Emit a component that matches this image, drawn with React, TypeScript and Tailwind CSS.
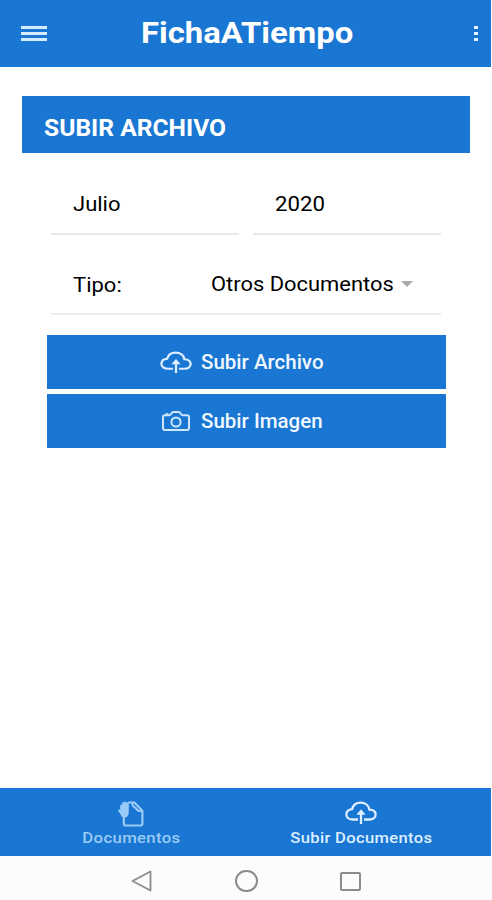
import React from "react";

function CloudUp({ className }: { className: string }) {
  return (
    <svg className={className} viewBox="0 0 32 24" fill="none" stroke="currentColor" strokeWidth="2.300" preserveAspectRatio="none">
      <path d="M13 18.500H8C4 18.500 1.400 16.400 1.400 13.400c0-3 2.400-5 5.700-5.300C8.100 4.200 11.400 1.600 15.600 1.600c4.700 0 8.200 2.900 8.800 7 3.700.2 6.200 2.200 6.200 5 0 2.900-2.400 4.900-5.900 4.900H19" />
      <path d="M16 23V11" />
      <path d="M11.300 13.800 16 8.300l4.700 5.500z" fill="currentColor" stroke="none" />
    </svg>
  );
}

function Camera() {
  return (
    <svg className="h-5 w-7" viewBox="0 0 28 20" fill="none" stroke="currentColor" strokeWidth="2">
      <path d="M3 4.200h4.200c1.200 0 1.600-1 2.300-2 .5-.8 1-1.200 2-1.200h5c1 0 1.500.4 2 1.200.7 1 1.100 2 2.300 2H25c1.200 0 2 .8 2 1.900V17c0 1.200-.8 2-2 2H3c-1.200 0-2-.8-2-2V6.100c0-1.100.8-1.900 2-1.900z" />
      <circle cx="14" cy="11" r="4.600" />
      <path d="M3.500 2.800h3" strokeWidth="1.400" />
    </svg>
  );
}

function Documents() {
  return (
    <svg className="h-[27px] w-7" viewBox="0 0 28 27" fill="none">
      <path d="M6.800 16v7.500c0 1.200.8 2 2 2h14.600c1.200 0 2-.8 2-2V11L17.500 2.500H11" stroke="currentColor" strokeWidth="2.200" />
      <path d="M15.500 2.500v2c0 1.500.8 1.900 2 2.600 2 1.200 2.500 3.900 4.500 3.900h3" stroke="currentColor" strokeWidth="2" />
      <path d="M3.200 5.500c0-1.300 1.500-1.300 2-.4V3c0-1.300 1.800-1.300 2 0 0-2 2.300-2 2.400 0 .3-1.100 2.200-1 2.200.4V12c0 3.500-1.700 5.500-4.200 5.500-2.300 0-3.500-1.500-4.500-4L1 10.800c-.4-1.300 1.100-1.800 2.200-.6z" fill="currentColor" />
    </svg>
  );
}

export default function App() {
  return (
    <div className="flex h-[900px] w-[492px] flex-col overflow-hidden bg-white font-['Roboto',sans-serif] text-black">
      <header className="mr-px flex h-[67px] shrink-0 items-center bg-[#1976d2] pl-[21px] pr-[13px] text-white">
        <div className="flex w-[26px] flex-col gap-[3px] text-[#d5ebff]">
          <i className="h-[3px] bg-current" />
          <i className="h-[3px] bg-current" />
          <i className="h-[3px] bg-current" />
        </div>
        <h1 className="mb-[2px] ml-[94px] grow origin-left scale-x-[1.095] whitespace-nowrap text-[30px] leading-none font-bold">FichaATiempo</h1>
        <div className="flex flex-col gap-[3px]">
          <i className="h-[3px] w-1 bg-[#e4f2ff]" />
          <i className="h-[3px] w-1 bg-[#e4f2ff]" />
          <i className="h-[3px] w-1 bg-[#e4f2ff]" />
        </div>
      </header>

      <main className="flex grow flex-col pt-[29px]">
        <div className="ml-[22px] flex h-[57px] w-[448px] items-center bg-[#1976d2] pt-[7px] pl-[22px] text-white">
          <h2 className="origin-left scale-x-[1.07] whitespace-nowrap text-[23px] leading-none font-bold">SUBIR ARCHIVO</h2>
        </div>

        <div className="ml-[51px] flex h-[82px] w-[390px] gap-[14px]">
          <div className="flex flex-1 border-b-2 border-[#e9e9e9] pt-[40px] pl-[22px]">
            <span className="origin-left scale-x-[1.1] self-start text-[20px] leading-[23px]">Julio</span>
          </div>
          <div className="flex flex-1 border-b-2 border-[#e9e9e9] pt-[40px] pl-[22px]">
            <span className="origin-left scale-x-[1.11] self-start text-[20px] leading-[23px]">2020</span>
          </div>
        </div>

        <div className="ml-[51px] flex h-[80px] w-[390px] border-b-2 border-[#ededed] pt-[38px] pl-[22px]">
          <span className="w-[138px] origin-left scale-x-[1.1] pt-px text-[20px] leading-[23px]">Tipo:</span>
          <span className="w-[190px] origin-left scale-x-[1.095] whitespace-nowrap text-[20px] leading-[23px]">Otros Documentos</span>
          <i className="mt-[8px] h-0 w-0 border-x-[6.500px] border-t-[6.500px] border-x-transparent border-t-[#aaaaaa]" />
        </div>

        <div className="mt-5 ml-[47px] flex w-[399px] flex-col gap-[5px] text-[#f0f8ff]">
          <button className="flex h-[54px] items-center bg-[#1976d2] pl-[113px]">
            <CloudUp className="h-[23px] w-8 text-[#dceeff]" />
            <span className="ml-[9px] origin-left scale-x-[1.025] whitespace-nowrap text-[20px] leading-none font-medium">Subir Archivo</span>
          </button>
          <button className="flex h-[54px] items-center bg-[#1976d2] pl-[115px]">
            <span className="text-[#cfe6fb]"><Camera /></span>
            <span className="ml-[11px] origin-left scale-x-[1.025] whitespace-nowrap text-[20px] leading-none font-medium">Subir Imagen</span>
          </button>
        </div>
      </main>

      <nav className="mr-px flex h-[68px] shrink-0 bg-[#1976d2]">
        <div className="flex w-[262px] flex-col items-center pt-[12px] text-[#9acbf6]">
          <Documents />
          <span className="mt-[2px] scale-x-[1.08] text-[15.500px] leading-[18px] font-medium tracking-[0.300px]">Documentos</span>
        </div>
        <div className="flex w-[198px] flex-col items-center pt-[13px] text-[#dceeff]">
          <CloudUp className="h-[24px] w-8" />
          <span className="mt-[4px] scale-x-[1.07] whitespace-nowrap text-[15.500px] leading-[18px] font-medium tracking-[0.300px]">Subir Documentos</span>
        </div>
      </nav>

      <footer className="flex h-[44px] shrink-0 items-center bg-[#fcfcfc] pt-1.5 pl-[131px] text-[#8c8c8c]">
        <svg className="h-[22px] w-[22px]" viewBox="0 0 22 22" fill="none" stroke="currentColor" strokeWidth="1.800">
          <path d="M19.500 1.500v19L1.500 11z" strokeLinejoin="round" />
        </svg>
        <i className="ml-[82px] h-[22px] w-[23px] rounded-full border-2 border-current" />
        <i className="ml-[82px] h-[19px] w-[21px] rounded-[2px] border-2 border-current" />
      </footer>
    </div>
  );
}
